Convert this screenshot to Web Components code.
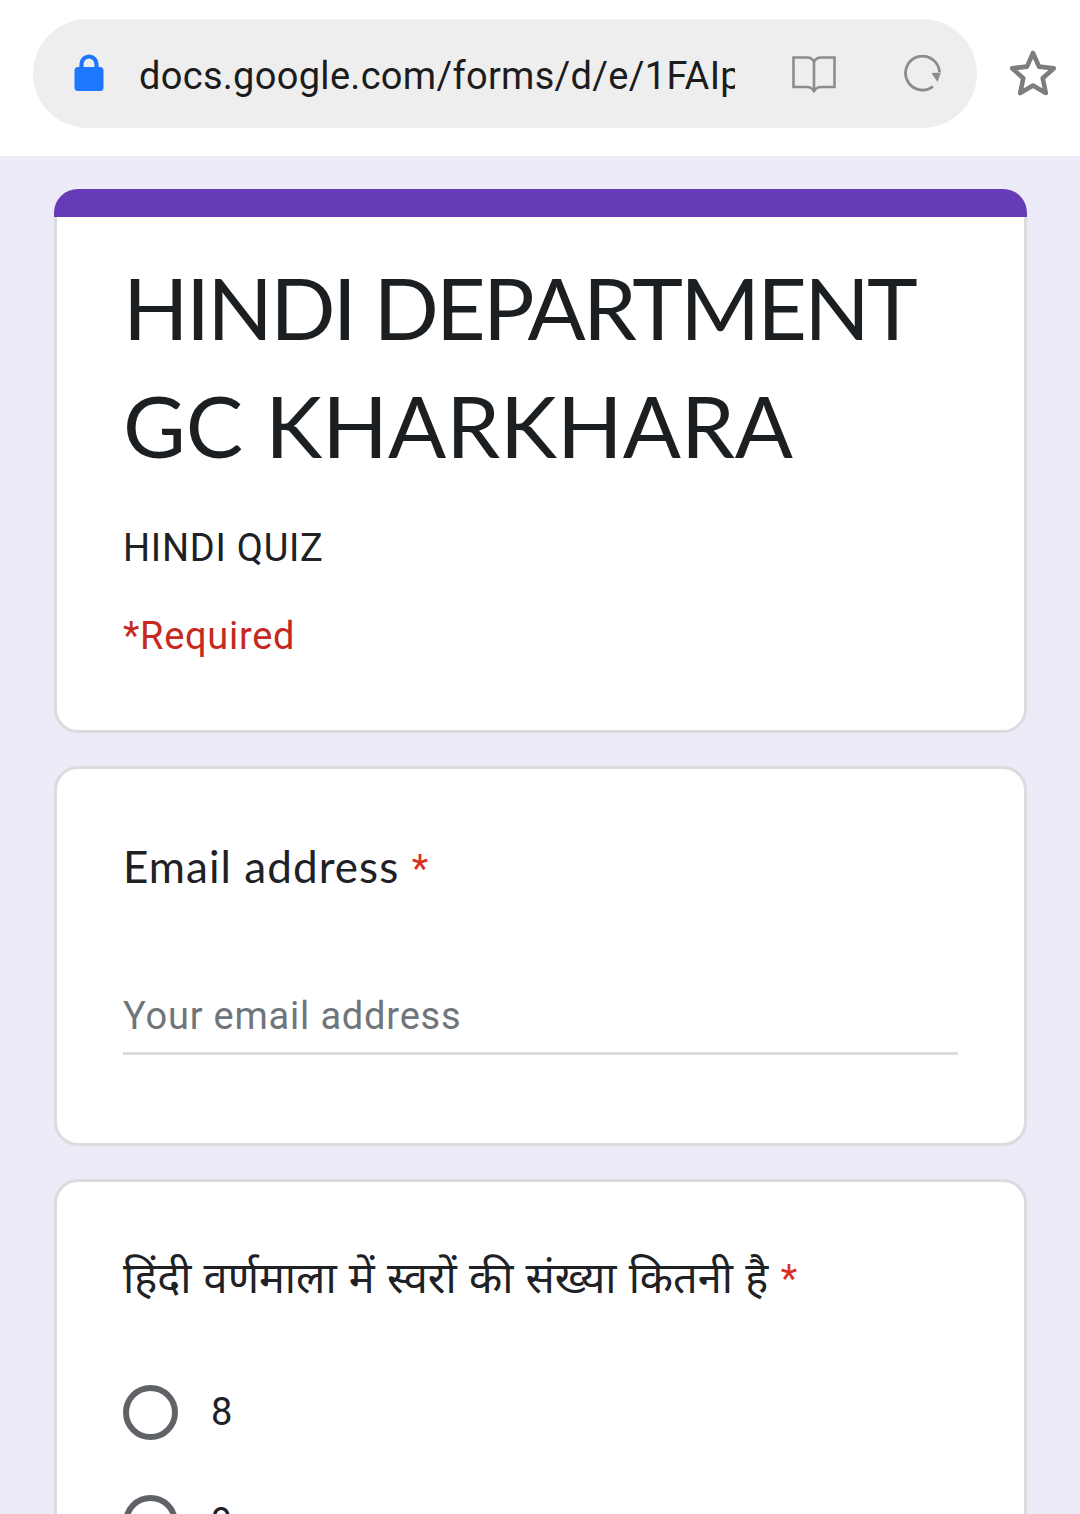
<!DOCTYPE html>
<html><head><meta charset="utf-8">
<style>
html,body{margin:0;padding:0;height:1514px;overflow:hidden;background:#ecebf7;}
body{font-family:Roboto,"Noto Sans",sans-serif;color:#202124;}
</style></head>
<body>
<browser-bar url="docs.google.com/forms/d/e/1FAIp"></browser-bar>
<form-page>
  <form-card accent pad="header">
    <form-title><span style="letter-spacing:-2.75px">HINDI DEPARTMENT</span><br>GC KHARKHARA</form-title>
    <form-desc>HINDI QUIZ</form-desc>
    <form-req>*Required</form-req>
  </form-card>
  <form-card pad="email">
    <form-question>Email address</form-question>
    <form-input placeholder="Your email address"></form-input>
  </form-card>
  <form-card pad="q">
    <form-question hindi>हिंदी वर्णमाला में स्वरों की संख्या कितनी है</form-question>
    <form-radio>8</form-radio>
    <form-radio>9</form-radio>
  </form-card>
</form-page>
<script>
function def(name, html, init){
  customElements.define(name, class extends HTMLElement{
    constructor(){super();this.attachShadow({mode:'open'}).innerHTML=html;}
    connectedCallback(){ if(init) init(this); }
  });
}
def('browser-bar',`<style>
:host{display:flex;align-items:flex-start;height:156px;background:#fff;box-sizing:border-box;padding:19px 0 0 33px}
.pill{width:944px;height:109px;border-radius:55px;background:#eeeeee;display:flex;align-items:center;box-sizing:border-box;padding-left:41px}
.lock{width:30px;height:38px;margin:-2px 35px 0 0;flex:none}
.url{width:596px;overflow:hidden;white-space:nowrap;font:400 38px/50px Roboto,sans-serif;letter-spacing:.3px;color:#1c1c1c;margin-top:4px;flex:none}
.book{margin-left:57px;flex:none}
.reload{margin-left:68px;flex:none}
.star{margin-left:31px;margin-top:30px;flex:none}
</style>
<div class="pill">
<svg class="lock" viewBox="0 0 30 38"><path d="M7.500 15V10a7.500 7.500 0 0 1 15 0v5" fill="none" stroke="#1e78ff" stroke-width="4.200"/><rect x="0.500" y="13" width="29" height="24" rx="3.500" fill="#1e78ff"/></svg>
<div class="url" id="u"></div>
<svg class="book" width="44" height="38" viewBox="0 0 44 38"><path d="M1.500 2.500H15Q20 2.500 22 7Q24 2.500 29 2.500H42.500V32H29Q24.500 32 22 36Q19.500 32 15 32H1.500ZM22 7V36" fill="none" stroke="#8c8c8c" stroke-width="2.600"/></svg>
<svg class="reload" width="38" height="38" viewBox="0 0 38 38"><path d="M29 31.500A17 17 0 1 1 35.500 17" fill="none" stroke="#8c8c8c" stroke-width="2.800"/><path d="M27.500 18L37 17.500L33.500 27Z" fill="#8c8c8c"/></svg>
</div>
<svg class="star" width="50" height="50" viewBox="0 0 50 50"><path d="M25 4L31 17.600L45.800 19.300L34.700 29.300L37.800 44L25 36.500L12.200 44L15.300 29.300L4.200 19.300L19 17.600Z" fill="none" stroke="#7d7d7d" stroke-width="4.600" stroke-linejoin="round"/></svg>`,
el=>{el.shadowRoot.getElementById('u').textContent=el.getAttribute('url');});
def('form-page',`<style>:host{display:flex;flex-direction:column;gap:33px;padding:33px 53px 0 54px}</style><slot></slot>`);
def('form-card',`<style>
:host{display:block;background:#fff;border:3px solid #dadce0;border-radius:24px;box-sizing:border-box;overflow:hidden}
:host([pad=header]){height:544px;border-top:0;padding:0 66px;overflow:visible}
:host([pad=email]){height:380px;padding:70px 66px 0 66px}
:host([pad=q]){height:600px;padding:68px 66px 0 66px}
.bar{display:none;height:28px;background:#673ab7;margin:0 -69px;border-radius:24px 24px 0 0}
:host([accent]) .bar{display:block}
</style><div class="bar"></div><slot></slot>`);
def('form-title',`<style>:host{display:block;font:400 86px/118px Lato,sans-serif;color:#1c1f22;margin-top:31px;white-space:nowrap}</style><slot></slot>`);
def('form-desc',`<style>:host{display:block;font:400 38px/50px Roboto,sans-serif;letter-spacing:.75px;color:#202124;margin-top:39px}</style><slot></slot>`);
def('form-req',`<style>:host{display:block;font:400 38px/50px Roboto,sans-serif;letter-spacing:.7px;color:#c5291f;margin-top:38px}</style><slot></slot>`);
def('form-question',`<style>:host{display:block;font:400 44px/54px Lato,"Noto Sans Devanagari",sans-serif;letter-spacing:1.05px;color:#202124}
:host([hindi]){font:400 43.300px/54px Inter,"Noto Sans Devanagari",sans-serif;letter-spacing:0}
.s{color:#d93025;font-family:Roboto,sans-serif;font-size:38px;margin-left:3px;letter-spacing:0;position:relative;top:-1px}</style><slot></slot><span class="s"> *</span>`);
def('form-input',`<style>:host{display:block;margin-top:89px;height:66px;border-bottom:3px solid #dadce0;font:400 38px/60px Roboto,sans-serif;color:#70757a;letter-spacing:.8px;width:835px}</style><div id="p"></div>`,
el=>{el.shadowRoot.getElementById('p').textContent=el.getAttribute('placeholder');});
def('form-radio',`<style>:host{display:flex;align-items:center;height:110px;font:400 38px/56px Roboto,sans-serif;color:#202124}
:host(:first-of-type){margin-top:50px}
.r{width:55px;height:55px;border:6px solid #5f6368;border-radius:50%;box-sizing:border-box;margin-right:33px;flex:none}</style><div class="r"></div><slot></slot>`);
</script>
</body></html>
